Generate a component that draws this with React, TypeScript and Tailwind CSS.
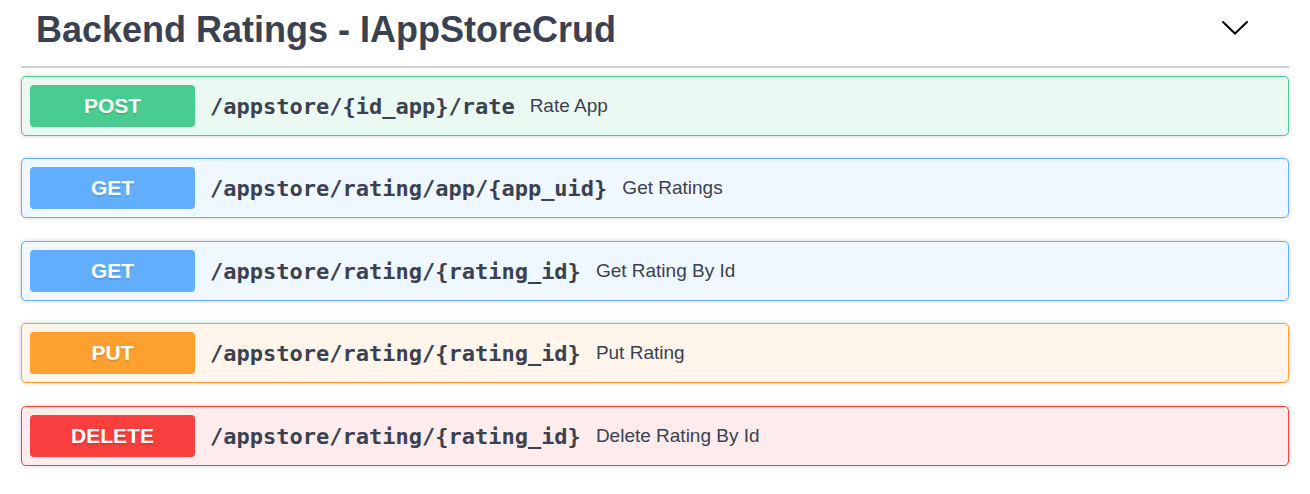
const operations = [
  { method: 'POST', path: '/appstore/{id_app}/rate', summary: 'Rate App', row: 'border-[#49cc90] bg-[#ebf9f3]', badge: 'bg-[#49cc90]' },
  { method: 'GET', path: '/appstore/rating/app/{app_uid}', summary: 'Get Ratings', row: 'border-[#61affe] bg-[#eff7ff]', badge: 'bg-[#61affe]' },
  { method: 'GET', path: '/appstore/rating/{rating_id}', summary: 'Get Rating By Id', row: 'border-[#61affe] bg-[#eff7ff]', badge: 'bg-[#61affe]' },
  { method: 'PUT', path: '/appstore/rating/{rating_id}', summary: 'Put Rating', row: 'border-[#fca130] bg-[#fff5ea]', badge: 'bg-[#fca130]' },
  { method: 'DELETE', path: '/appstore/rating/{rating_id}', summary: 'Delete Rating By Id', row: 'border-[#f93e3e] bg-[#feebeb]', badge: 'bg-[#f93e3e]' },
];

export default function App() {
  return (
    <main className="bg-white px-[21px] pb-7 font-['Liberation_Sans',Arial,sans-serif] text-[#3b4151]">
      <header className="flex h-[68px] items-center justify-between border-b-2 border-[#cfd0d2] pr-10 pb-[7px] pl-[15px]">
        <h1 className="text-4xl font-bold">Backend Ratings - IAppStoreCrud</h1>
        <button type="button" aria-label="Collapse section" className="mb-1 text-black">
          <svg width="28" height="16" viewBox="0 0 28 16" fill="none" stroke="currentColor" strokeWidth="2" strokeLinecap="round">
            <path d="M2 2 14 13.5 26 2" />
          </svg>
        </button>
      </header>
      <ul className="flex flex-col gap-[22px] pt-2">
        {operations.map((op) => (
          <li key={op.method + op.summary} className="even:mb-px">
            <button type="button" className={`flex h-[60px] w-full items-center gap-[15px] rounded-[5px] border px-2 text-left shadow-[0_0_4px_rgba(0,0,0,0.19)] ${op.row}`}>
              <span className={`flex h-[42px] w-[165px] shrink-0 items-center justify-center rounded-[4px] text-[21px] font-bold text-white [text-shadow:0_2px_1px_rgba(0,0,0,0.1)] ${op.badge}`}>{op.method}</span>
              <span className="font-['DejaVu_Sans_Mono',monospace] text-[22px] font-bold">{op.path}</span>
              <span className="text-[19px]">{op.summary}</span>
            </button>
          </li>
        ))}
      </ul>
    </main>
  );
}
